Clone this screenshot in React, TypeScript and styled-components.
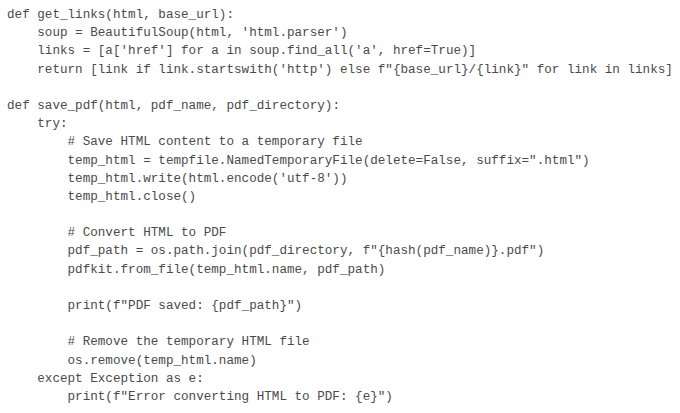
import React from "react";
import styled, { createGlobalStyle } from "styled-components";

const Global = createGlobalStyle`
  html, body { margin: 0; padding: 0; background: #ffffff; }
`;

const Page = styled.div`
  width: 680px;
  height: 413px;
  background: #ffffff;
  padding: 6px 0 0 7px;
  box-sizing: border-box;
  overflow: hidden;
`;

const Code = styled.div`
  display: flex;
  flex-direction: column;
  font-family: "Liberation Mono", "Courier New", monospace;
  font-size: 12.62px;
  line-height: 18.2px;
  color: #4a4a4a;
`;

const Line = styled.div<{ $indent: number }>`
  white-space: pre;
  height: 18.2px;
  padding-left: ${(p) => p.$indent * 4}ch;
`;

const lines: [number, string][] = [
  [0, "def get_links(html, base_url):"],
  [1, "soup = BeautifulSoup(html, 'html.parser')"],
  [1, "links = [a['href'] for a in soup.find_all('a', href=True)]"],
  [1, "return [link if link.startswith('http') else f\"{base_url}/{link}\" for link in links]"],
  [0, ""],
  [0, "def save_pdf(html, pdf_name, pdf_directory):"],
  [1, "try:"],
  [2, "# Save HTML content to a temporary file"],
  [2, "temp_html = tempfile.NamedTemporaryFile(delete=False, suffix=\".html\")"],
  [2, "temp_html.write(html.encode('utf-8'))"],
  [2, "temp_html.close()"],
  [0, ""],
  [2, "# Convert HTML to PDF"],
  [2, "pdf_path = os.path.join(pdf_directory, f\"{hash(pdf_name)}.pdf\")"],
  [2, "pdfkit.from_file(temp_html.name, pdf_path)"],
  [0, ""],
  [2, "print(f\"PDF saved: {pdf_path}\")"],
  [0, ""],
  [2, "# Remove the temporary HTML file"],
  [2, "os.remove(temp_html.name)"],
  [1, "except Exception as e:"],
  [2, "print(f\"Error converting HTML to PDF: {e}\")"],
];

export default function App() {
  return (
    <>
      <Global />
      <Page>
        <Code>
          {lines.map(([indent, text], i) => (
            <Line key={i} $indent={indent}>
              {text}
            </Line>
          ))}
        </Code>
      </Page>
    </>
  );
}
